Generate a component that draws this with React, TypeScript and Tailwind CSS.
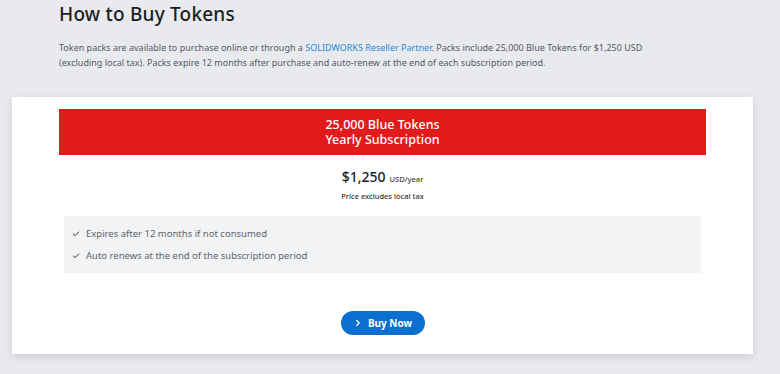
import { Check, ChevronRight } from "lucide-react";

const features = [
  "Expires after 12 months if not consumed",
  "Auto renews at the end of the subscription period",
];

export default function App() {
  return (
    <div
      className="h-[374px] w-[780px] overflow-hidden bg-[#e9eaee] text-[#1a1a1a]"
      style={{ fontFamily: '"Noto Sans", "Open Sans", sans-serif' }}
    >
      {/* Intro */}
      <section className="px-[59px] pt-[1px]">
        <h1 className="text-[19px] leading-[26px] font-medium tracking-[0.2px] text-[#1b1e24]">
          How to Buy Tokens
        </h1>
        <p className="mt-[13px] w-[612px] text-[9px] leading-[15px] text-[#555a62]">
          Token packs are available to purchase online or through a{" "}
          <a className="text-[#1f8ad6]">SOLIDWORKS Reseller Partner</a>. Packs
          include 25,000 Blue Tokens for $1,250 USD (excluding local tax). Packs
          expire 12 months after purchase and auto-renew at the end of each
          subscription period.
        </p>
      </section>

      {/* Pricing card */}
      <div className="mt-[27px] ml-[12px] w-[741px] h-[257px] bg-white pt-[12px] shadow-[0_3px_8px_rgba(0,0,0,0.12)]">
        <div className="mx-[47px] flex h-[46px] flex-col items-center justify-center bg-[#e31a1a] text-[12.5px] leading-[15px] font-medium text-white">
          <span>25,000 Blue Tokens</span>
          <span>Yearly Subscription</span>
        </div>

        <div className="mt-[12px] flex items-baseline justify-center gap-[4px] text-[#1b1e24]">
          <span className="text-[14px] font-medium leading-[20px]">$1,250</span>
          <span className="text-[7.5px] font-medium text-[#444]">USD/year</span>
        </div>
        <p className="mt-[4px] text-center text-[7.5px] font-medium text-[#333]">
          Price excludes local tax
        </p>

        <ul className="mx-[52px] mt-[14px] flex h-[57px] flex-col justify-center gap-[7px] bg-[#f1f3f5] px-[8px]">
          {features.map((f) => (
            <li key={f} className="flex items-center gap-[6px] text-[9.5px] leading-[15px] text-[#60646b]">
              <Check className="h-[8px] w-[8px] text-[#333]" strokeWidth={3} />
              {f}
            </li>
          ))}
        </ul>

        <div className="mt-[38px] flex justify-center">
          <button className="flex h-[24px] w-[84px] items-center justify-center gap-[5px] rounded-full bg-[#0b6fd0] text-[10px] font-bold text-white">
            <ChevronRight className="h-[10px] w-[10px]" strokeWidth={3} />
            Buy Now
          </button>
        </div>
      </div>
    </div>
  );
}
